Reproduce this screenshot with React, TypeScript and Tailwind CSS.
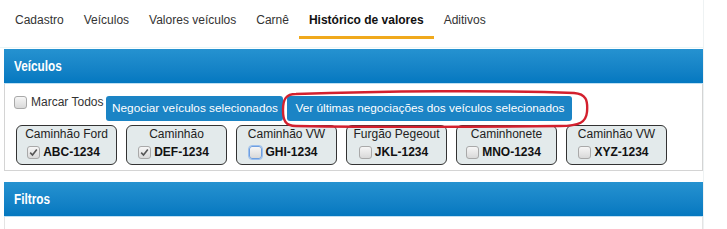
import React from "react";

const tabs = [
  { label: "Cadastro" },
  { label: "Veículos" },
  { label: "Valores veículos" },
  { label: "Carnê" },
  { label: "Histórico de valores", active: true },
  { label: "Aditivos" },
];

const cards = [
  { title: "Caminhão Ford", plate: "ABC-1234", checked: true },
  { title: "Caminhão", plate: "DEF-1234", checked: true },
  { title: "Caminhão VW", plate: "GHI-1234", focus: true },
  { title: "Furgão Pegeout", plate: "JKL-1234" },
  { title: "Caminhonete", plate: "MNO-1234" },
  { title: "Caminhão VW", plate: "XYZ-1234" },
];

function Box({ checked, focus }: { checked?: boolean; focus?: boolean }) {
  return (
    <span
      className={
        "relative inline-flex h-[13px] w-[13px] shrink-0 items-center justify-center rounded-[3px] border bg-gradient-to-b from-[#f6f6f6] to-[#d9d9d9] " +
        (focus ? "border-[#6f9fe0] outline outline-1 outline-[#9cc0ee]" : "border-[#a9a9a9]")
      }
    >
      {checked && (
        <svg width="9" height="9" viewBox="0 0 9 9">
          <path d="M1.2 4.6 L3.5 7 L7.8 1.6" fill="none" stroke="#555" strokeWidth="1.6" />
        </svg>
      )}
    </span>
  );
}

function PanelHeader({ title }: { title: string }) {
  return (
    <div className="flex h-[35px] items-center bg-gradient-to-b from-[#2592d0] to-[#0478c0] pl-[10px] border-b border-[#bfe0f3]">
      <span className="inline-block origin-left scale-x-[0.84] text-[14px] font-bold text-white">{title}</span>
    </div>
  );
}

export default function App() {
  return (
    <div
      className="relative h-[229px] w-[727px] overflow-hidden bg-white text-[#222]"
      style={{ fontFamily: '"Liberation Sans", Arial, sans-serif' }}
    >
      <div className="w-[704px] border-r border-[#eef2f3]">
        {/* Tabs */}
        <div className="flex h-[48px] items-start border-b border-[#eaf6f6] pl-[5px]">
          {tabs.map((t) => (
            <div
              key={t.label}
              className={
                "px-[10px] pt-[13px] pb-[9px] text-[12px] leading-[14px] border-b-[3px] " +
                (t.active ? "border-[#f0a91c] font-bold text-[#111]" : "border-transparent text-[#333]")
              }
            >
              {t.label}
            </div>
          ))}
        </div>

        {/* Veículos panel */}
        <div className="ml-[4px] mt-[1px]">
          <PanelHeader title="Veículos" />
          <div className="border-x border-b border-[#d4d4d4] pl-[9px] pt-[10px] pb-[5px]">
            <div className="flex items-start">
              <label className="mt-[1px] flex items-center gap-[4px] text-[12px] leading-[14px] text-[#333]">
                <Box />
                <span>Marcar Todos</span>
              </label>
              <button className="ml-[3px] mt-[2px] flex h-[25px] w-[177px] items-center justify-center whitespace-nowrap rounded-[3px] bg-[#1b84c5] text-[11.8px] text-white">
                Negociar veículos selecionados
              </button>
              <button className="ml-[4px] mt-[2px] flex h-[25px] w-[285px] items-center justify-center whitespace-nowrap rounded-[3px] bg-[#1b84c5] text-[11.8px] text-white">
                Ver últimas negociações dos veículos selecionados
              </button>
            </div>
            <div className="ml-[2px] mt-[4px] flex gap-[9px]">
              {cards.map((c, i) => (
                <div
                  key={i}
                  className="flex h-[40px] w-[101px] flex-col items-center rounded-[6px] border border-[#333] bg-[#e3eaeb] pt-[1px]"
                >
                  <div className="text-[12px] leading-[14px] text-[#222]">{c.title}</div>
                  <div className="mt-[4px] flex items-center gap-[3px] pr-[6px]">
                    <Box checked={c.checked} focus={c.focus} />
                    <span className="text-[12px] font-bold leading-[15px] text-[#111]">{c.plate}</span>
                  </div>
                </div>
              ))}
            </div>
          </div>
        </div>

        {/* Filtros panel */}
        <div className="ml-[4px] mt-[11px]">
          <PanelHeader title="Filtros" />
          <div className="h-[20px] border-x border-[#e4e4e4]" />
        </div>
      </div>

      {/* Red annotation */}
      <svg className="pointer-events-none absolute left-0 top-0" width="727" height="229">
        <path
          d="M296 94 C380 91 500 90 574 93 C586 94 588 100 587 112 C586 122 580 126 560 126 C480 127 360 127 296 126 C285 126 283 120 283 110 C283 99 286 94 296 94 Z"
          fill="none"
          stroke="#d3202e"
          strokeWidth="2.4"
        />
      </svg>
    </div>
  );
}
